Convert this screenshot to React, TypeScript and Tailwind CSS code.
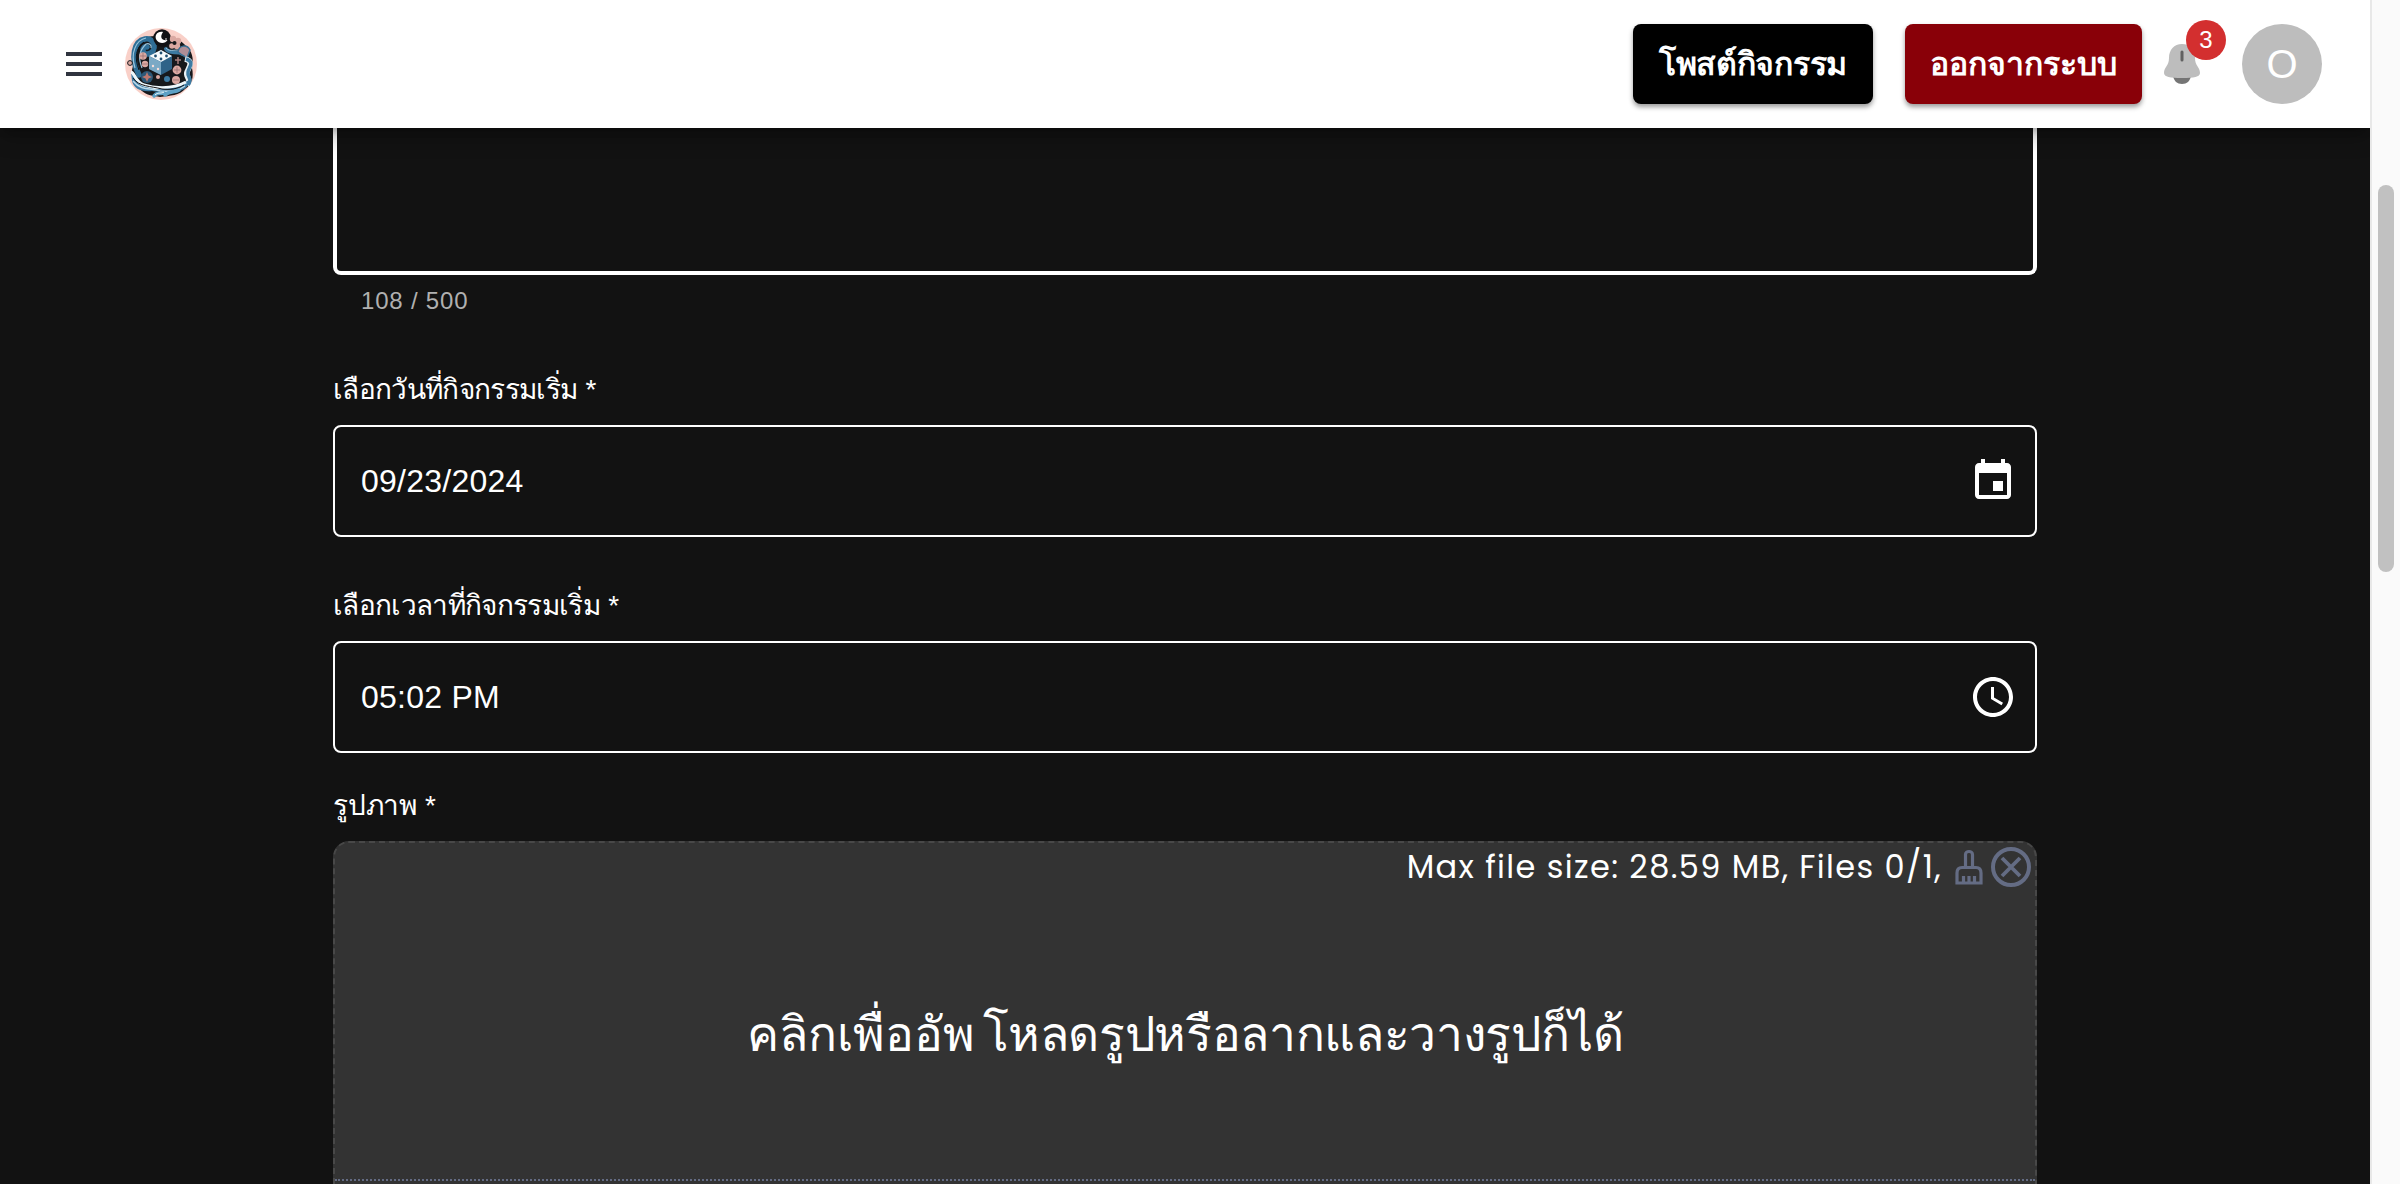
import React from 'react';

function Logo() {
  return (
    <svg className="size-[72px] shrink-0" viewBox="0 0 72 72" fill="none">
      <circle cx="36" cy="36" r="36" fill="#f9d0c8" />
      <path d="M22 9C10 12 6 26 8 38c-3 9 0 18 9 25 4 4 12 5 18 6 10-1 20-2 25-8 7-4 9-12 7-21 2-10 0-17-6-22-5-6-11-8-17-8-6-2-14-3-22-1Z" fill="#17191c" />
      <path d="M14 47C5 29 9 13 20 11c10-2 13 13 3 15-7 1-6-9-1-7" stroke="#2f6e96" strokeWidth="5.5" strokeLinecap="round" />
      <path d="M10 40C5 25 11 12 21 10M17 40c-4-10-3-17 4-24 3-1 6 1 5 4" stroke="#9ac4db" strokeWidth="1.2" />
      <path d="M14 42c-5-13-3-22 5-28" stroke="#101114" strokeWidth="1" />
      <circle cx="37" cy="10" r="8.7" fill="#101114" />
      <path d="M38 4c-6-1-9 4-6.500 8s9 4 11 0c-6 1-8-3-4.500-8Z" fill="#fff" />
      <circle cx="41" cy="11" r="0.8" fill="#fff" />
      <path d="M41 21c4 6 10 1 17 5" stroke="#3d7ba3" strokeWidth="4" strokeLinecap="round" />
      <path d="M41 20c4 5 10 0 15 3" stroke="#9ac4db" strokeWidth="1" />
      <g fill="#dba9a2">
        <circle cx="48" cy="11" r="3.200" /><circle cx="53" cy="13" r="3.200" /><circle cx="52" cy="18" r="3.200" /><circle cx="47" cy="18" r="2.800" />
        <circle cx="18" cy="28" r="3.800" /><circle cx="20" cy="36" r="3.200" /><circle cx="5" cy="35" r="2.400" stroke="#17191c" />
        <circle cx="52" cy="42" r="4.400" /><circle cx="51" cy="52" r="4" /><circle cx="33" cy="49" r="2" />
      </g>
      <g stroke="#8f6c6e" strokeWidth="0.700"><path d="M15 28h6m-3-3v6m-1 5h6M49 42h6m-3-3v6m-4 7h6" /></g>
      <circle cx="49.500" cy="15" r="2" fill="#17191c" />
      <path d="M53 24c1-7 9-8 12-2l-3 8-5-3Z" fill="#b08e96" stroke="#396f92" strokeWidth="1.500" />
      <path d="M60 31c9 2 4 8 2 13s5 7 0 13" stroke="#e9f2f7" strokeWidth="5.500" />
      <path d="M61 31c9 3 3 8 2 13s5 7 0 13" stroke="#3d7ba3" strokeWidth="3.500" />
      <path d="m36 22 11 6v13l-11 6-12-6V28Z" fill="#2f6388" />
      <path d="m36 22 11 6-11 6-12-6Z" fill="#f6fafc" />
      <path d="m24 28 12 6v13l-12-6Z" fill="#7ba9c5" />
      <g fill="#204e70"><circle cx="36" cy="25" r="1.400" /><circle cx="30.500" cy="28" r="1.400" /><circle cx="41.500" cy="28" r="1.400" /><circle cx="36" cy="31" r="1.400" /></g>
      <g fill="#f8ded9"><circle cx="28" cy="38" r="1.200" /><circle cx="33" cy="41" r="1.200" /></g>
      <path d="M53 29v7m-3-4h6" stroke="#a97f7d" strokeWidth="1.500" />
      <circle cx="22" cy="49" r="6" fill="#2c5877" />
      <path d="m22 44 1.500 3.500L27 49l-3.500 1.500L22 54l-1.500-3.500L17 49l3.500-1.500Z" fill="#bb776f" />
      <circle cx="42" cy="51" r="3" fill="#3d7ba3" />
      <path d="M6 44c6 1 5 11 16 13s28 4 42-5c1 8-8 12-17 12-5-2-12 1-20-1C16 64 9 61 7 53Z" fill="#3d7ba3" />
      <path d="M6 44c4 1 4 10 13 13s27 5 42-3" stroke="#eff7fa" strokeWidth="3" />
      <path d="M8 50c6 9 18 8 29 11 8 1 16 0 22-4" stroke="#101114" strokeWidth="1" />
      <path d="M8 53c8 10 18 7 27 10 9 1 18 0 25-5" stroke="#bcdaea" strokeWidth="1.500" />
      <path d="M29 68c3-5 6-1 10-3m1 2c5-5 10-2 14-5" stroke="#5ca0c5" strokeWidth="3.500" strokeLinecap="round" />
      <path d="M30 67c3-3 6-1 9-3" stroke="#eff7fa" strokeWidth="1" />
    </svg>
  );
}

function Bell() {
  return (
    <svg className="h-10 w-9" viewBox="0 0 36 40">
      <path d="M9 32h18c-1 5-4 8-9 8s-8-3-9-8Z" fill="#757575" />
      <path d="M18 0C10 0 5 6 5 14c0 8-5 9-5 15 0 4 6 5 18 5s18-1 18-5c0-6-5-7-5-15C31 6 26 0 18 0Z" fill="#bdbdbd" />
      <path d="M18 8v8" stroke="#616161" strokeWidth="3" strokeLinecap="round" />
    </svg>
  );
}

function Label({ text, className }: { text: string; className: string }) {
  return (
    <div className="flex h-9 items-center text-[28px] leading-9 whitespace-nowrap text-white">
      <span className={className}>{text}</span>
      <span className="ml-2">*</span>
    </div>
  );
}

function Field({ label, value, icon }: { label: string; value: string; icon: string }) {
  return (
    <div>
      <Label text={label} className="tracking-[-0.66px]" />
      <div className="mt-[17px] flex h-28 items-center justify-between rounded-lg border-2 border-white pr-[18px] pl-[26px]">
        <span className="text-[32px] leading-[46px] tracking-[0.25px] text-white">{value}</span>
        <svg className="size-12" viewBox="0 0 24 24" fill="#fff"><path d={icon} /></svg>
      </div>
    </div>
  );
}

const calendar = 'M17 12h-5v5h5v-5zM16 1v2H8V1H6v2H5c-1.11 0-1.99.9-1.99 2L3 19c0 1.1.89 2 2 2h14c1.1 0 2-.9 2-2V5c0-1.1-.9-2-2-2h-1V1h-2zm3 18H5V8h14v11z';
const clock = 'M11.99 2C6.47 2 2 6.48 2 12s4.47 10 9.99 10C17.52 22 22 17.52 22 12S17.52 2 11.99 2zM12 20c-4.42 0-8-3.58-8-8s3.58-8 8-8 8 3.58 8 8-3.58 8-8 8zM12.5 7H11v6l5.25 3.15.75-1.23-4.5-2.67z';

export default function App() {
  return (
    <div className='flex h-[1184px] w-[2400px] overflow-hidden bg-[#121212] font-["Liberation_Sans","Noto_Sans",sans-serif]'>
      <div className="flex w-[2370px] flex-col">
        <header className="relative z-10 flex h-32 shrink-0 items-center bg-white pl-[66px] shadow-[0_4px_8px_-2px_rgba(0,0,0,0.2),0_8px_20px_rgba(0,0,0,0.26)]">
          <div className="flex h-6 w-9 flex-col justify-between">
            <div className="h-1 bg-[#30343f]" /><div className="h-1 bg-[#30343f]" /><div className="h-1 bg-[#30343f]" />
          </div>
          <div className="ml-[23px]"><Logo /></div>
          <div className="ml-auto flex items-center">
            <button className="h-20 w-60 rounded-lg bg-black text-[32px] font-semibold tracking-[-0.3px] whitespace-nowrap text-white shadow-[0_3px_5px_rgba(0,0,0,0.4)]">โพสต์กิจกรรม</button>
            <button className="ml-8 h-20 w-[237px] rounded-lg bg-[#890008] text-[32px] font-semibold whitespace-nowrap text-white shadow-[0_3px_5px_rgba(0,0,0,0.4)]">ออกจากระบบ</button>
            <div className="relative ml-[22px]">
              <Bell />
              <span className="absolute -top-6 left-[22px] flex size-10 items-center justify-center rounded-full bg-[#d32f2f] text-[24px] text-white">3</span>
            </div>
            <div className="mr-12 ml-[42px] flex size-20 items-center justify-center rounded-full bg-[#bdbdbd] text-[40px] text-white">O</div>
          </div>
        </header>
        <main className="ml-[333px] flex w-[1704px] flex-col">
          <div className="h-[147px] shrink-0 rounded-b-lg border-4 border-t-0 border-white" />
          <div className="mt-[6px] flex h-10 items-center pl-7 text-[24px] tracking-[0.8px] text-[#b0b0b0]">108 / 500</div>
          <div className="mt-[51px]"><Field label="เลือกวันที่กิจกรรมเริ่ม" value="09/23/2024" icon={calendar} /></div>
          <div className="mt-[51px]"><Field label="เลือกเวลาที่กิจกรรมเริ่ม" value="05:02 PM" icon={clock} /></div>
          <div className="mt-[35px]"><Label text="รูปภาพ" className="tracking-[-0.2px]" /></div>
          <section className="mt-[17px] h-[400px] shrink-0 rounded-t-2xl border-2 border-dashed border-[#484848] bg-[#333333]">
            <div className="flex h-12 items-center justify-end text-[#646c84]">
              <span className="mr-[13px] font-[Poppins,Inter,sans-serif] text-[32px] tracking-[1.38px] whitespace-nowrap text-white">Max file size: 28.59 MB, Files 0/1,</span>
              <svg className="mr-2 h-9 w-7" viewBox="0 0 28 36" fill="none" stroke="currentColor" strokeWidth="3.2">
                <path d="M10.500 18.500V5.500c0-4 7-4 7 0v13M2 34V24c0-3.500 2-5.500 5-5.500h14c3 0 5 2 5 5.500v10H2ZM8.500 34v-7M14 34v-7m5.500 7v-7" />
              </svg>
              <svg className="mr-1 size-10" viewBox="0 0 40 40" fill="none" stroke="currentColor" strokeWidth="4">
                <circle cx="20" cy="20" r="18" /><path d="m11 11 18 18M29 11 11 29" strokeWidth="3.800" />
              </svg>
            </div>
            <div className="flex h-[288px] items-center justify-center text-[48px] whitespace-nowrap text-white">
              <span>คลิกเพื่ออัพ</span>
              <span className="ml-2 tracking-[-0.35px]">โหลดรูปหรือลากและวางรูปก็ได้</span>
            </div>
            <div className="border-t-2 border-dotted border-[#646c84]" />
          </section>
        </main>
      </div>
      <aside className="relative z-20 flex w-[30px] justify-center border-l-2 border-[#e8e8e8] bg-[#fafafa] pt-[185px]">
        <div className="h-[387px] w-4 rounded-full bg-[#c1c1c1]" />
      </aside>
    </div>
  );
}
